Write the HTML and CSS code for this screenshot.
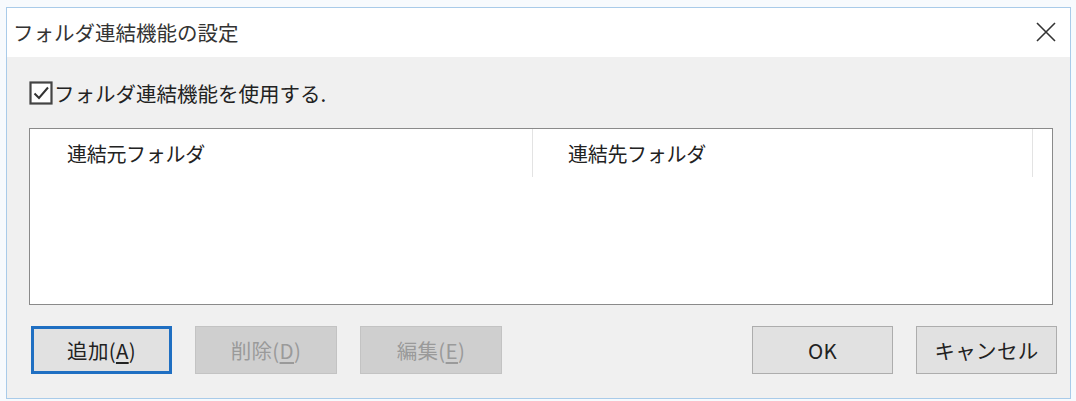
FILE: index.html
```html
<!DOCTYPE html>
<html lang="ja">
<head>
<meta charset="utf-8">
<title>フォルダ連結機能の設定</title>
<link rel="stylesheet" href="styles.css">
</head>
<body>
<div class="window">
  <div class="titlebar">
    <span class="title">フォルダ連結機能の設定</span>
    <span class="close" aria-label="閉じる">
      <svg width="22" height="22" viewBox="0 0 22 22"><path d="M2 2 L20 20 M20 2 L2 20" stroke="#333" stroke-width="1.6" fill="none"/></svg>
    </span>
  </div>
  <div class="client">
    <label class="check-row">
      <span class="checkbox">
        <svg width="24" height="24" viewBox="0 0 24 24"><rect x="1.5" y="1.5" width="21" height="21" fill="#fff" stroke="#444" stroke-width="2.2"/><path d="M5.5 12.5 L10 17 L19 6.5" stroke="#333" stroke-width="2" fill="none"/></svg>
      </span>
      <span class="check-label">フォルダ連結機能を使用する.</span>
    </label>
    <div class="listbox">
      <div class="list-header">
        <div class="col col-src">連結元フォルダ</div>
        <div class="col col-dst">連結先フォルダ</div>
        <div class="col col-rest"></div>
      </div>
    </div>
    <div class="buttons">
      <button class="btn btn-default">追加(<u>A</u>)</button>
      <button class="btn btn-disabled">削除(<u>D</u>)</button>
      <button class="btn btn-disabled">編集(<u>E</u>)</button>
      <span class="spacer"></span>
      <button class="btn">OK</button>
      <button class="btn">キャンセル</button>
    </div>
  </div>
</div>
</body>
</html>
```
FILE: styles.css
```css
html, body {
  margin: 0;
  padding: 0;
  background: #f7fafd;
}
body {
  padding: 7px 0 0 6px;
  font-family: "Noto Sans CJK JP", "Noto Sans", sans-serif;
  color: #222;
}
.window {
  width: 1065px;
  height: 392px;
  box-sizing: border-box;
  border: 1px solid #a9cbe9;
  display: flex;
  flex-direction: column;
  background: #f0f0f0;
}
.titlebar {
  height: 49px;
  background: #fff;
  display: flex;
  align-items: center;
  padding: 0 13px 0 6px;
  flex: none;
}
.title {
  font-size: 20.5px;
  color: #333;
  flex: 1;
  letter-spacing: 0;
  margin-top: -2px;
}
.close {
  display: flex;
  width: 22px;
  height: 22px;
  margin-top: -2px;
}
.client {
  flex: 1;
  display: flex;
  flex-direction: column;
  padding: 0 13px 0 22px;
}
.check-row {
  display: flex;
  align-items: center;
  height: 24px;
  margin-top: 24px;
  gap: 1px;
}
.checkbox {
  display: flex;
  width: 24px;
  height: 24px;
}
.check-label {
  font-size: 20.5px;
  color: #222;
  letter-spacing: 0;
}
.listbox {
  margin-top: 23px;
  width: 1024px;
  height: 177px;
  box-sizing: border-box;
  border: 1px solid #8a8a8a;
  background: #fff;
}
.list-header {
  display: flex;
  height: 48px;
}
.col {
  font-size: 20px;
  display: flex;
  align-items: center;
  letter-spacing: -0.3px;
  color: #222;
  box-sizing: border-box;
}
.col-src {
  width: 503px;
  padding-left: 37px;
  border-right: 1px solid #e3e3e3;
}
.col-dst {
  width: 500px;
  padding-left: 35px;
  border-right: 1px solid #e3e3e3;
}
.col-rest {
  flex: 1;
}
.buttons {
  display: flex;
  margin-top: 21px;
  padding-left: 2px;
  width: 1026px;
  gap: 23px;
}
.spacer {
  flex: 1;
}
.btn {
  width: 141px;
  height: 48px;
  box-sizing: border-box;
  border: 1px solid #adadad;
  background: #e1e1e1;
  font-family: "Noto Sans CJK JP", "Noto Sans", sans-serif;
  font-size: 20.5px;
  color: #222;
  padding: 0;
  letter-spacing: 0.3px;
}
.btn u {
  text-underline-offset: 3px;
}
.btn-default {
  border: 3px solid #1f6fc2;
}
.btn-disabled {
  width: 142px;
  background: #cfcfcf;
  border-color: #c3c3c3;
  color: #9a9a9a;
}
```
